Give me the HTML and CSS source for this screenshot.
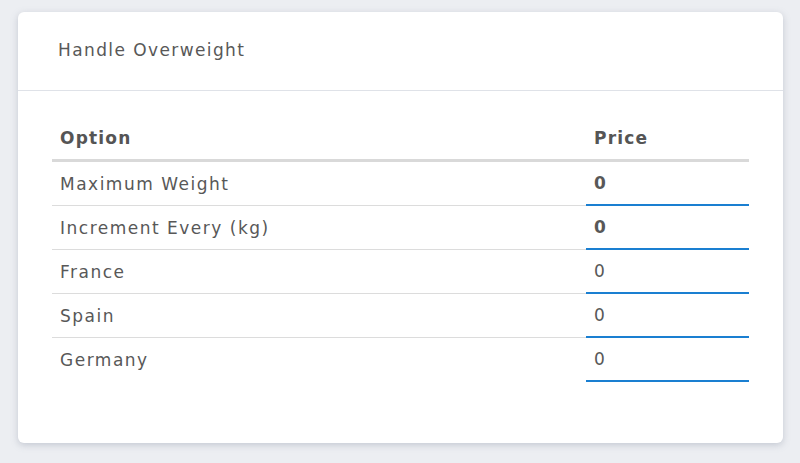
FILE: index.html
```html
<!DOCTYPE html>
<html lang="en">
<head>
<meta charset="utf-8">
<title>Handle Overweight</title>
<link rel="stylesheet" href="styles.css">
</head>
<body>
<div class="card">
  <div class="card-header">Handle Overweight</div>
  <div class="card-body">
    <div class="table">
      <div class="th">Option</div>
      <div class="th">Price</div>

      <div class="td">Maximum Weight</div>
      <div class="td price"><span class="val bold">0</span></div>

      <div class="td">Increment Every (kg)</div>
      <div class="td price"><span class="val bold">0</span></div>

      <div class="td">France</div>
      <div class="td price"><span class="val">0</span></div>

      <div class="td">Spain</div>
      <div class="td price"><span class="val">0</span></div>

      <div class="td last">Germany</div>
      <div class="td price"><span class="val">0</span></div>
    </div>
  </div>
</div>
</body>
</html>
```

FILE: styles.css
```css
html, body {
  margin: 0;
  height: 100%;
}
body {
  background: #eceef2;
  font-family: "DejaVu Sans", "Inter", sans-serif;
  color: #585858;
  padding: 12px 17px 20px 18px;
  box-sizing: border-box;
}
.card {
  background: #ffffff;
  border-radius: 6px;
  box-shadow: 0 2px 7px rgba(120, 128, 150, 0.35);
  height: 431px;
  box-sizing: border-box;
}
.card-header {
  height: 79px;
  box-sizing: border-box;
  padding: 0 40px 2px 40px;
  display: flex;
  align-items: center;
  font-size: 17px;
  letter-spacing: 1.4px;
  color: #585858;
  border-bottom: 1px solid #dfe2e8;
}
.card-body {
  padding: 24px 34px 0 34px;
}
.table {
  display: grid;
  grid-template-columns: 534px 1fr;
}
.th {
  height: 47px;
  box-sizing: border-box;
  display: flex;
  align-items: center;
  padding-left: 8px;
  padding-top: 1px;
  font-weight: 700;
  font-size: 17px;
  letter-spacing: 1.2px;
  color: #555555;
  border-bottom: 3px solid #d9d9d9;
}
.td {
  height: 44px;
  box-sizing: border-box;
  display: flex;
  align-items: center;
  padding-left: 8px;
  font-size: 17px;
  letter-spacing: 1.5px;
  color: #585858;
  border-bottom: 1px solid #dcdcdc;
}
.td.last {
  border-bottom-color: transparent;
}
.td.price {
  border-bottom: 2px solid #1a7fd1;
}
.val.bold {
  font-weight: 700;
}
```
